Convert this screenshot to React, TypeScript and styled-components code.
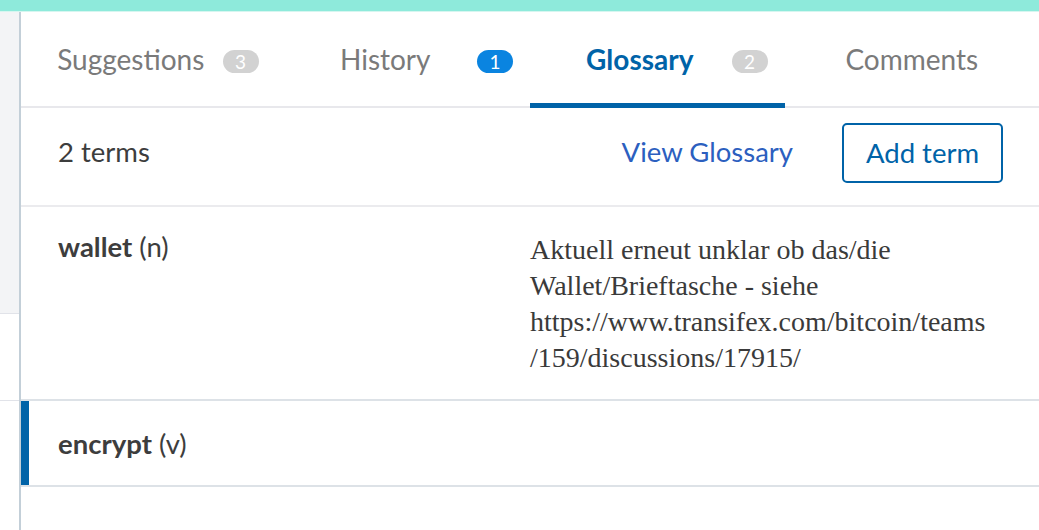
import styled, { createGlobalStyle } from 'styled-components';

const GlobalStyle = createGlobalStyle`
  html, body {
    margin: 0;
    padding: 0;
    background: #ffffff;
  }
  body {
    font-family: Lato, "Liberation Sans", sans-serif;
    overflow: hidden;
  }
`;

const Page = styled.div`
  width: 1039px;
  height: 530px;
  display: flex;
  flex-direction: column;
  overflow: hidden;
`;

const TopBar = styled.div`
  height: 11px;
  flex-shrink: 0;
  background: #8eeadb;
  border-bottom: 1px solid #d6f6f0;
`;

const Body = styled.div`
  flex: 1;
  display: flex;
  min-height: 0;
`;

const SideStrip = styled.div`
  width: 19px;
  flex-shrink: 0;
  border-right: 2px solid #c3cfd8;
  display: flex;
  flex-direction: column;
`;

const SideBlock = styled.div<{ $height: number; $shade?: boolean }>`
  height: ${(p) => p.$height}px;
  flex-shrink: 0;
  background: ${(p) => (p.$shade ? '#f3f4f6' : '#ffffff')};
  border-bottom: 1px solid #e1e3e9;
`;

const Panel = styled.div`
  flex: 1;
  display: flex;
  flex-direction: column;
  min-width: 0;
`;

const TabBar = styled.div`
  display: grid;
  grid-template-columns: repeat(4, 1fr);
  height: 94px;
  border-bottom: 2px solid #e8e8ec;
`;

// tabs with a counter keep room for it on the right
const Tab = styled.div<{ $active?: boolean; $counted?: boolean }>`
  position: relative;
  display: flex;
  align-items: center;
  justify-content: center;
  padding: 0 ${(p) => (p.$counted ? 35 : 0)}px 0 0;
  font-size: 28px;
  font-weight: ${(p) => (p.$active ? 700 : 400)};
  color: ${(p) => (p.$active ? '#0063a8' : '#7a7a7a')};

  &::after {
    content: '';
    display: ${(p) => (p.$active ? 'block' : 'none')};
    position: absolute;
    left: 0;
    right: 0;
    bottom: -2px;
    height: 5px;
    background: #0063a8;
  }
`;

const Badge = styled.span<{ $blue?: boolean }>`
  position: absolute;
  right: 17px;
  top: 38px;
  width: 36px;
  height: 23px;
  border-radius: 12px;
  background: ${(p) => (p.$blue ? '#0a84e0' : '#d2d2d2')};
  color: #ffffff;
  font-size: 19px;
  font-weight: 400;
  line-height: 23px;
  text-align: center;
`;

const Toolbar = styled.div`
  height: 90px;
  display: flex;
  align-items: center;
  padding: 0 36px 7px 37px;
  border-bottom: 2px solid #ebebee;
`;

const Count = styled.div`
  flex: 1;
  font-size: 27.5px;
  color: #3d3d3d;
  padding-bottom: 3px;
`;

const LinkButton = styled.a`
  font-size: 27.5px;
  color: #2c5fbf;
  text-decoration: none;
  margin-right: 49px;
  padding-bottom: 3px;
`;

const OutlineButton = styled.button`
  width: 161px;
  height: 60px;
  border: 2px solid #0063a8;
  border-radius: 5px;
  background: #ffffff;
  color: #0063a8;
  font-family: Lato, "Liberation Sans", sans-serif;
  font-size: 27.5px;
  padding: 0 0 1px;
`;

const TermRow = styled.div<{ $height: number; $active?: boolean }>`
  height: ${(p) => p.$height}px;
  display: grid;
  grid-template-columns: 1fr 1fr;
  border-bottom: 2px solid #dde2e7;
  box-shadow: ${(p) => (p.$active ? 'inset 8px 0 0 #0063a8' : 'none')};
  align-items: ${(p) => (p.$active ? 'center' : 'start')};
`;

const Term = styled.div<{ $top: number }>`
  padding: ${(p) => p.$top}px 0 0 37px;
  font-size: 27.5px;
  color: #3d3d3d;

  strong {
    font-weight: 700;
  }
`;

const Definition = styled.div`
  padding: 25px 47px 0 0;
  font-family: "Liberation Serif", "Times New Roman", serif;
  font-size: 28px;
  line-height: 36px;
  color: #3a3a3a;
  overflow-wrap: anywhere;
`;

export default function App() {
  return (
    <Page>
      <GlobalStyle />
      <TopBar />
      <Body>
        <SideStrip>
          <SideBlock $height={301} $shade />
          <SideBlock $height={86} />
        </SideStrip>
        <Panel>
          <TabBar>
            <Tab $counted>
              Suggestions
              <Badge>3</Badge>
            </Tab>
            <Tab $counted>
              History
              <Badge $blue>1</Badge>
            </Tab>
            <Tab $active $counted>
              Glossary
              <Badge>2</Badge>
            </Tab>
            <Tab>Comments</Tab>
          </TabBar>
          <Toolbar>
            <Count>2 terms</Count>
            <LinkButton href="#">View Glossary</LinkButton>
            <OutlineButton>Add term</OutlineButton>
          </Toolbar>
          <TermRow $height={192}>
            <Term $top={23}>
              <strong>wallet</strong> (n)
            </Term>
            <Definition>
              Aktuell erneut unklar ob das/die Wallet/Brieftasche - siehe
              https://www.transifex.com/bitcoin/teams/159/discussions/17915/
            </Definition>
          </TermRow>
          <TermRow $height={84} $active>
            <Term $top={0}>
              <strong>encrypt</strong> (v)
            </Term>
            <div />
          </TermRow>
        </Panel>
      </Body>
    </Page>
  );
}
